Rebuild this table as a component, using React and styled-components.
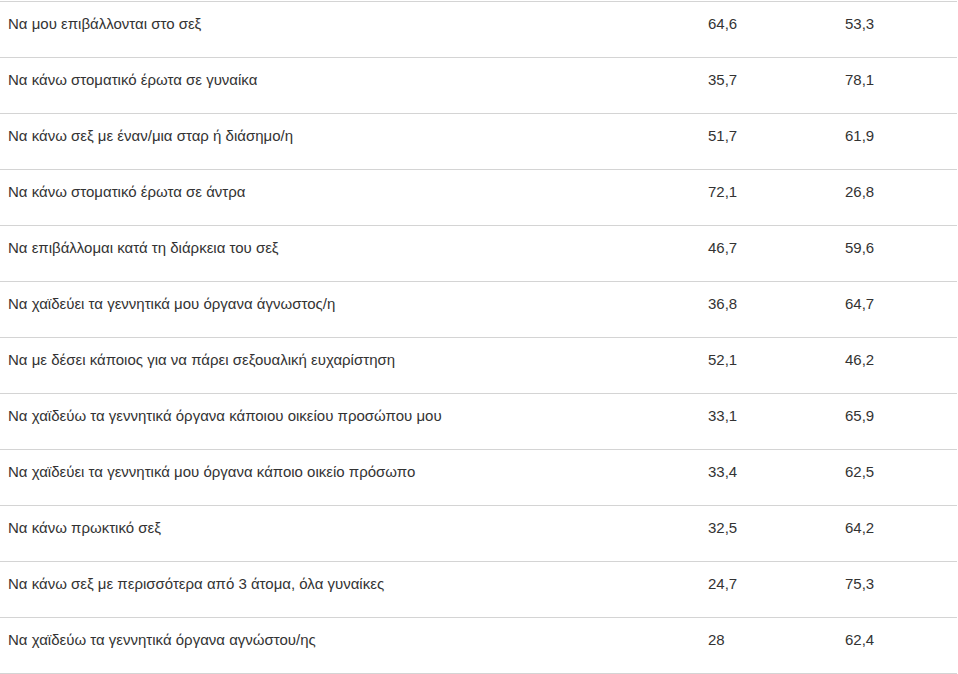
import React from 'react'
import styled, { createGlobalStyle } from 'styled-components'

const rows = [
    ['Να μου επιβάλλονται στο σεξ', '64,6', '53,3'],
    ['Να κάνω στοματικό έρωτα σε γυναίκα', '35,7', '78,1'],
    ['Να κάνω σεξ με έναν/μια σταρ ή διάσημο/η', '51,7', '61,9'],
    ['Να κάνω στοματικό έρωτα σε άντρα', '72,1', '26,8'],
    ['Να επιβάλλομαι κατά τη διάρκεια του σεξ', '46,7', '59,6'],
    ['Να χαϊδεύει τα γεννητικά μου όργανα άγνωστος/η', '36,8', '64,7'],
    ['Να με δέσει κάποιος για να πάρει σεξουαλική ευχαρίστηση', '52,1', '46,2'],
    ['Να χαϊδεύω τα γεννητικά όργανα κάποιου οικείου προσώπου μου', '33,1', '65,9'],
    ['Να χαϊδεύει τα γεννητικά μου όργανα κάποιο οικείο πρόσωπο', '33,4', '62,5'],
    ['Να κάνω πρωκτικό σεξ', '32,5', '64,2'],
    ['Να κάνω σεξ με περισσότερα από 3 άτομα, όλα γυναίκες', '24,7', '75,3'],
    ['Να χαϊδεύω τα γεννητικά όργανα αγνώστου/ης', '28', '62,4'],
]

function App() {
    return (
        <>
            <GlobalStyle />
            <StyledTable>
                {rows.map((row) => (
                    <StyledRow key={row[0]}>
                        <StyledCell>{row[0]}</StyledCell>
                        <StyledCell>{row[1]}</StyledCell>
                        <StyledCell>{row[2]}</StyledCell>
                        <StyledCell />
                    </StyledRow>
                ))}
            </StyledTable>
        </>
    )
}

const GlobalStyle = createGlobalStyle`
    body {
        margin: 0;
        background: #fff;
        font-family: "Liberation Sans", Arial, sans-serif;
    }
`
const StyledTable = styled.div`
    width: 957px;
    margin-top: 1px;
    border-top: 1px solid #d4d4d4;
`
const StyledRow = styled.div`
    display: grid;
    grid-template-columns: 700px 137px 120px;
    height: 55px;
    border-bottom: 1px solid #d4d4d4;
`
const StyledCell = styled.div`
    padding: 13px 8px 0 8px;
    font-size: 15px;
    line-height: 18px;
    color: #333;
`

export default App
